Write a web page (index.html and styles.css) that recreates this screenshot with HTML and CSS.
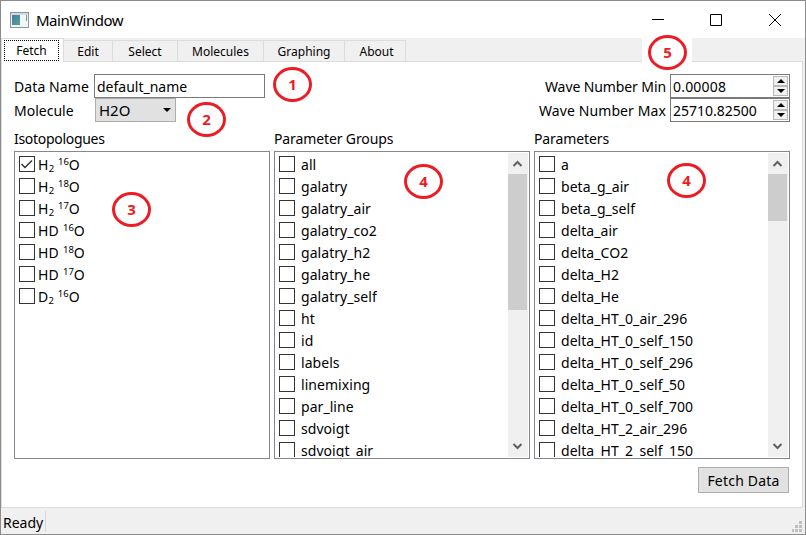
FILE: index.html
```html
<!DOCTYPE html>
<html lang="en">
<head>
<meta charset="utf-8">
<title>MainWindow</title>
<link rel="stylesheet" href="styles.css">
</head>
<body>
<div class="window">
  <header class="titlebar">
    <svg class="app-icon" width="19" height="16" viewBox="0 0 19 16"><defs><linearGradient id="g" x1="0" y1="0" x2="1" y2="1"><stop offset="0" stop-color="#3f78b4"/><stop offset="1" stop-color="#52a884"/></linearGradient></defs><rect x=".5" y=".5" width="18" height="15" fill="#f4f5f6" stroke="#8d969c"/><rect x="1" y="1" width="17" height="2" fill="#d3dade"/><rect x="2" y="3" width="8" height="10" fill="url(#g)"/><path d="M16.500 3v6" stroke="#58a68c"/></svg>
    <span class="title">MainWindow</span>
    <svg class="controls" width="140" height="16" viewBox="0 0 140 16" fill="none" stroke="#000"><path d="M0 7.500h12M58.500 2.500h11v11h-11zM117 2l12 12M129 2l-12 12"/></svg>
  </header>
  <nav class="tabs">
    <div class="tab active"><span>Fetch</span></div>
    <div class="tab edit">Edit</div>
    <div class="tab select">Select</div>
    <div class="tab molecules">Molecules</div>
    <div class="tab graphing">Graphing</div>
    <div class="tab about">About</div>
  </nav>
  <main class="pane">
    <section class="form">
      <div class="fields">
        <label class="l-name">Data Name</label><div class="input">default_name</div>
        <label class="l-mol">Molecule</label><div class="combo"><span>H2O</span><svg width="8" height="4" viewBox="0 0 8 4"><path d="M0 0h8L4 4z"/></svg></div>
      </div>
      <div class="fields ranges">
        <label class="l-min">Wave Number Min</label>
        <div class="input spin"><span class="v-min">0.00008</span><div class="steps"><i><svg width="8" height="4" viewBox="0 0 8 4"><path d="M0 4h8L4 0z"/></svg></i><i><svg width="8" height="4" viewBox="0 0 8 4"><path d="M0 0h8L4 4z"/></svg></i></div></div>
        <label class="l-max">Wave Number Max</label>
        <div class="input spin"><span class="v-max">25710.82500</span><div class="steps"><i><svg width="8" height="4" viewBox="0 0 8 4"><path d="M0 4h8L4 0z"/></svg></i><i><svg width="8" height="4" viewBox="0 0 8 4"><path d="M0 0h8L4 4z"/></svg></i></div></div>
      </div>
    </section>
    <section class="columns">
      <div class="column">
        <h2 class="h-iso">Isotopologues</h2>
        <div class="list iso">
          <ul>
            <li><b class="box"><svg width="14" height="14" viewBox="0 0 14 14"><path d="M1.500 7l3.500 3.500 7-7" fill="none" stroke="#333" stroke-width="1.500"/></svg></b><span>H<sub>2</sub> <sup>16</sup>O</span></li>
            <li><b class="box"></b><span>H<sub>2</sub> <sup>18</sup>O</span></li>
            <li><b class="box"></b><span>H<sub>2</sub> <sup>17</sup>O</span></li>
            <li><b class="box"></b><span>HD <sup>16</sup>O</span></li>
            <li><b class="box"></b><span>HD <sup>18</sup>O</span></li>
            <li><b class="box"></b><span>HD <sup>17</sup>O</span></li>
            <li><b class="box"></b><span>D<sub>2</sub> <sup>16</sup>O</span></li>
          </ul>
        </div>
      </div>
      <div class="column">
        <h2 class="h-groups">Parameter Groups</h2>
        <div class="list">
          <ul>
            <li><b class="box"></b><span>all</span></li>
            <li><b class="box"></b><span>galatry</span></li>
            <li><b class="box"></b><span>galatry_air</span></li>
            <li><b class="box"></b><span>galatry_co2</span></li>
            <li><b class="box"></b><span>galatry_h2</span></li>
            <li><b class="box"></b><span>galatry_he</span></li>
            <li><b class="box"></b><span>galatry_self</span></li>
            <li><b class="box"></b><span>ht</span></li>
            <li><b class="box"></b><span>id</span></li>
            <li><b class="box"></b><span>labels</span></li>
            <li><b class="box"></b><span>linemixing</span></li>
            <li><b class="box"></b><span>par_line</span></li>
            <li><b class="box"></b><span>sdvoigt</span></li>
            <li><b class="box"></b><span>sdvoigt_air</span></li>
          </ul>
          <div class="scroll"><svg width="19" height="21" viewBox="0 0 19 21"><path d="M5.500 13L9.500 9l4 4"/></svg><div class="thumb long"></div><svg class="down" width="19" height="21" viewBox="0 0 19 21"><path d="M5.500 8l4 4 4-4"/></svg></div>
        </div>
      </div>
      <div class="column">
        <h2 class="h-params">Parameters</h2>
        <div class="list">
          <ul>
            <li><b class="box"></b><span>a</span></li>
            <li><b class="box"></b><span>beta_g_air</span></li>
            <li><b class="box"></b><span>beta_g_self</span></li>
            <li><b class="box"></b><span>delta_air</span></li>
            <li><b class="box"></b><span>delta_CO2</span></li>
            <li><b class="box"></b><span>delta_H2</span></li>
            <li><b class="box"></b><span>delta_He</span></li>
            <li><b class="box"></b><span>delta_HT_0_air_296</span></li>
            <li><b class="box"></b><span>delta_HT_0_self_150</span></li>
            <li><b class="box"></b><span>delta_HT_0_self_296</span></li>
            <li><b class="box"></b><span>delta_HT_0_self_50</span></li>
            <li><b class="box"></b><span>delta_HT_0_self_700</span></li>
            <li><b class="box"></b><span>delta_HT_2_air_296</span></li>
            <li><b class="box"></b><span>delta_HT_2_self_150</span></li>
          </ul>
          <div class="scroll"><svg width="19" height="21" viewBox="0 0 19 21"><path d="M5.500 13L9.500 9l4 4"/></svg><div class="thumb short"></div><svg class="down" width="19" height="21" viewBox="0 0 19 21"><path d="M5.500 8l4 4 4-4"/></svg></div>
        </div>
      </div>
    </section>
    <div class="actions"><div class="button">Fetch Data</div></div>
  </main>
  <footer class="status"><span>Ready</span>
    <svg width="10" height="11" viewBox="0 0 10 11" fill="#bfbfbf"><path d="M7 0h3v3H7zM7 4h3v3H7zM7 8h3v3H7zM3 4h3v3H3zM3 8h3v3H3zM0 8h2v3H0z"/></svg>
  </footer>
  <div class="note n1">1</div>
  <div class="note n2">2</div>
  <div class="note n3">3</div>
  <div class="note n4">4</div>
  <div class="note n4b">4</div>
  <div class="patch"></div>
  <div class="note n5">5</div>
</div>
</body>
</html>
```
FILE: styles.css
```css
* { box-sizing: border-box; }
body { margin: 0; font: 14px/20px "Noto Sans", "Open Sans", sans-serif; color: #000; }
.window { position: relative; width: 806px; height: 535px; border: 1px solid #8c8c8c; background: #f0f0f0; display: flex; flex-direction: column; overflow: hidden; white-space: nowrap; }
.titlebar { height: 37px; background: #fff; display: flex; align-items: center; padding: 0 13px 0 9px; flex: none; }
.title { margin-left: 7px; font-size: 15px; letter-spacing: -0.5px; }
.controls { margin-left: auto; }
.tabs { height: 23px; display: flex; align-items: flex-end; flex: none; font-size: 12px; }
.tab { height: 21px; border: solid #dcdcdc; border-width: 1px 1px 0 0; text-align: center; line-height: 21px; }
.tab.active { position: relative; z-index: 1; width: 63px; height: 24px; margin-bottom: -1px; background: #fff; border-left-width: 1px; padding: 1px 4px 1px 2px; }
.active span { display: block; height: 21px; line-height: 19px; border: 1px dotted #000; }
.edit { width: 49px; }
.select { width: 65px; }
.molecules { width: 86px; }
.graphing { width: 81px; }
.about { width: 61px; padding-left: 3px; }
.pane { height: 447px; margin-right: 2px; background: #fff; border: 1px solid #dcdcdc; padding: 12px 12px 0 12px; flex: none; }
.form { display: flex; justify-content: space-between; }
.fields { display: grid; grid-template-columns: 80px 171px; grid-auto-rows: 24px; align-items: center; }
.fields label { padding-top: 1px; }
.ranges { grid-template-columns: auto 120px; column-gap: 4px; text-align: right; }
.l-min { letter-spacing: -0.1px; }
.l-max { letter-spacing: 0.1px; }
.l-name { letter-spacing: 0.1px; }
.input { height: 24px; border: 1px solid #7a7a7a; padding: 1px 2px; line-height: 21px; background: #fff; }
.combo { width: 81px; height: 24px; margin-left: 1px; border: 1px solid #adadad; background: #e1e1e1; display: flex; align-items: center; justify-content: space-between; padding: 0 4px 0 3px; font-size: 15px; }
.spin { display: flex; justify-content: space-between; padding-right: 1px; }
.v-min { letter-spacing: 0.2px; }
.steps { width: 15px; }
.steps i { display: flex; align-items: center; justify-content: center; height: 10px; border: 1px solid #b9b9b9; background: #f0f0f0; }
.steps i svg { flex: none; }
.columns { display: flex; gap: 4px; margin-top: 7px; }
.column { width: 256px; }
h2 { margin: 0; font-size: 14px; font-weight: 400; line-height: 20px; height: 22px; }
.h-iso { letter-spacing: -0.3px; }
.h-groups { letter-spacing: -0.12px; }
.h-params { letter-spacing: -0.1px; }
.list { height: 308px; border: 1px solid #828790; padding: 1px; display: flex; justify-content: space-between; overflow: hidden; }
ul { list-style: none; margin: 0; padding: 0 0 0 3px; height: 304px; overflow: hidden; }
li { height: 22px; display: flex; align-items: center; }
.box { width: 16px; height: 16px; border: 1px solid #333; flex: none; }
.box svg { display: block; }
li span { margin-left: 6px; padding-top: 2px; line-height: 20px; letter-spacing: 0.05px; }
.iso li span { margin-left: 3px; letter-spacing: 0.25px; }
sub, sup { font-size: 9.5px; line-height: 0; letter-spacing: 0; }
sub { vertical-align: -2px; }
sup { vertical-align: 5px; }
.scroll { width: 20px; background: #f0f0f0; display: flex; flex-direction: column; }
.scroll svg { flex: none; fill: none; stroke: #606060; stroke-width: 2; }
.thumb { width: 19px; background: #cdcdcd; }
.long { height: 136px; }
.short { height: 47px; }
.down { margin-top: auto; }
.actions { display: flex; justify-content: flex-end; margin-top: 8px; padding-right: 1px; }
.button { width: 91px; height: 26px; border: 1px solid #adadad; background: #e1e1e1; text-align: center; line-height: 25px; letter-spacing: 0.2px; }
.status { height: 26px; display: flex; justify-content: space-between; padding: 3px 3px 1px 2px; }
.status span { width: 43px; border-right: 1px solid #d7d7d7; line-height: 24px; height: 21px; }
.status svg { align-self: flex-end; margin-bottom: 1px; }
.note { position: absolute; width: 39px; height: 35px; border: 3px solid #ed1c24; border-radius: 50%; color: #ed1c24; font: 700 15px/29px "Open Sans", "Noto Sans", sans-serif; text-align: center; }
.n1 { left: 272px; top: 66px; }
.n2 { left: 186px; top: 101px; }
.n3 { left: 111px; top: 191px; }
.n4 { left: 403px; top: 163px; }
.n4b { left: 666px; top: 162px; }
.n5 { left: 647px; top: 34px; }
.patch { position: absolute; left: 641px; top: 37px; width: 50px; height: 25px; background: #fff; z-index: 0; }
```
